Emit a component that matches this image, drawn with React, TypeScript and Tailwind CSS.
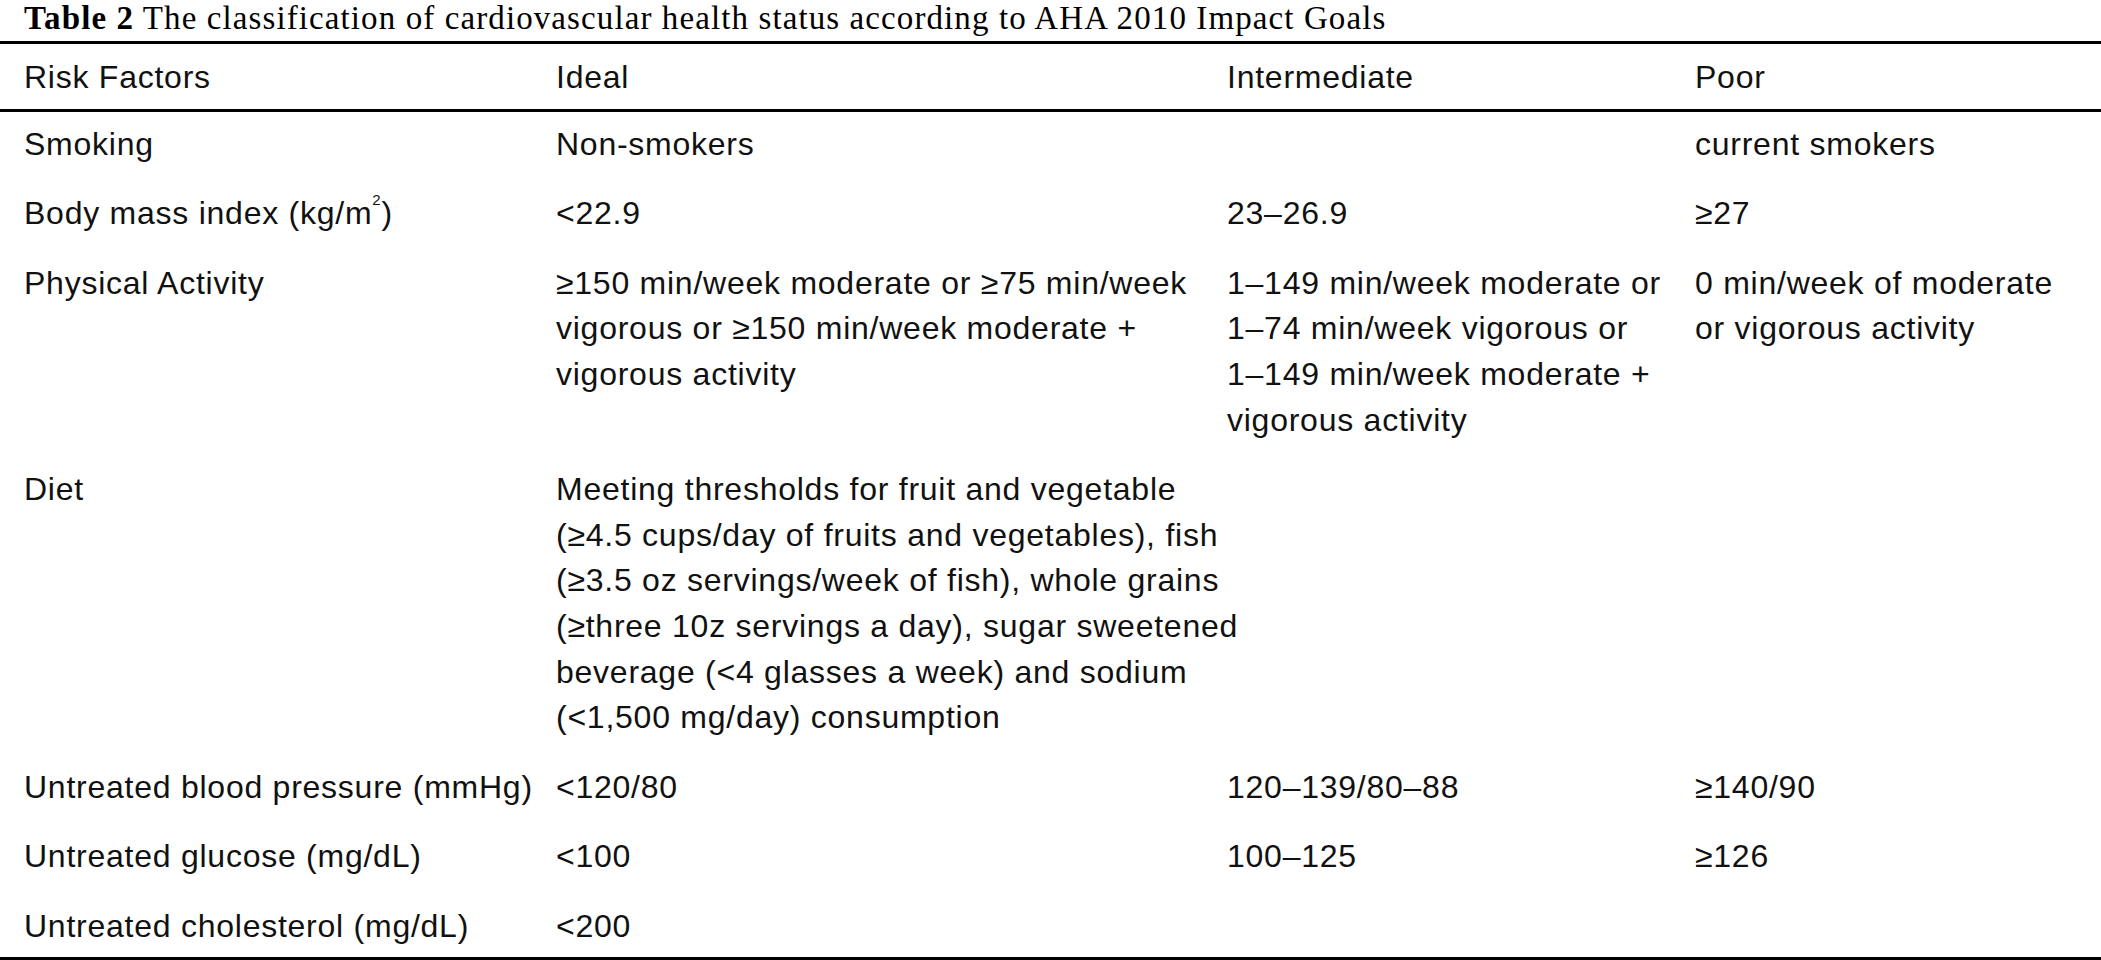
const rows: { factor: React.ReactNode; ideal: string[]; mid: string[]; poor: string[] }[] = [
  { factor: 'Smoking', ideal: ['Non-smokers'], mid: [], poor: ['current smokers'] },
  {
    factor: (
      <>
        Body mass index (kg/m<sup className="text-[15px] align-super leading-none">2</sup>)
      </>
    ),
    ideal: ['<22.9'],
    mid: ['23–26.9'],
    poor: ['≥27'],
  },
  {
    factor: 'Physical Activity',
    ideal: ['≥150 min/week moderate or ≥75 min/week', 'vigorous or ≥150 min/week moderate +', 'vigorous activity'],
    mid: ['1–149 min/week moderate or', '1–74 min/week vigorous or', '1–149 min/week moderate +', 'vigorous activity'],
    poor: ['0 min/week of moderate', 'or vigorous activity'],
  },
  {
    factor: 'Diet',
    ideal: [
      'Meeting thresholds for fruit and vegetable',
      '(≥4.5 cups/day of fruits and vegetables), fish',
      '(≥3.5 oz servings/week of fish), whole grains',
      '(≥three 10z servings a day), sugar sweetened',
      'beverage (<4 glasses a week) and sodium',
      '(<1,500 mg/day) consumption',
    ],
    mid: [],
    poor: [],
  },
  { factor: 'Untreated blood pressure (mmHg)', ideal: ['<120/80'], mid: ['120–139/80–88'], poor: ['≥140/90'] },
  { factor: 'Untreated glucose (mg/dL)', ideal: ['<100'], mid: ['100–125'], poor: ['≥126'] },
  { factor: 'Untreated cholesterol (mg/dL)', ideal: ['<200'], mid: [], poor: [] },
];

function Lines({ items }: { items: string[] }) {
  return (
    <>
      {items.map((l, i) => (
        <div key={i} className="whitespace-nowrap">
          {l}
        </div>
      ))}
    </>
  );
}

export default function App() {
  return (
    <div className="w-[2101px] h-[960px] overflow-hidden bg-white text-[#111]">
      <p className="pl-[24px] h-[41px] text-[33px] leading-[37px] tracking-[1.1px] whitespace-nowrap text-black font-['Liberation_Serif',serif]">
        <span className="font-bold">Table 2</span> The classification of cardiovascular health status according to AHA 2010 Impact Goals
      </p>
      <table className="w-full table-fixed border-separate border-spacing-0 border-t-[3px] border-b-[3px] border-black text-[32px] leading-[45.6px] tracking-[0.75px] font-['Liberation_Sans',Arial,sans-serif]">
        <colgroup>
          <col className="w-[556px]" />
          <col className="w-[671px]" />
          <col className="w-[468px]" />
          <col />
        </colgroup>
        <thead>
          <tr>
            <th className="pl-[24px] pt-[11px] pb-[8px] text-left font-normal align-top border-b-[3px] border-black">Risk Factors</th>
            <th className="pt-[11px] pb-[8px] text-left font-normal align-top border-b-[3px] border-black">Ideal</th>
            <th className="pt-[11px] pb-[8px] text-left font-normal align-top border-b-[3px] border-black">Intermediate</th>
            <th className="pt-[11px] pb-[8px] text-left font-normal align-top border-b-[3px] border-black">Poor</th>
          </tr>
        </thead>
        <tbody>
          {rows.map((r, i) => {
            const pad = i === rows.length - 1 ? 'pt-[10px] pb-[7px]' : 'pt-[10px] pb-[14px]';
            return (
              <tr key={i}>
                <td className={`pl-[24px] align-top whitespace-nowrap ${pad}`}>{r.factor}</td>
                <td className={`align-top ${pad}`}>
                  <Lines items={r.ideal} />
                </td>
                <td className={`align-top ${pad}`}>
                  <Lines items={r.mid} />
                </td>
                <td className={`align-top ${pad}`}>
                  <Lines items={r.poor} />
                </td>
              </tr>
            );
          })}
        </tbody>
      </table>
    </div>
  );
}
